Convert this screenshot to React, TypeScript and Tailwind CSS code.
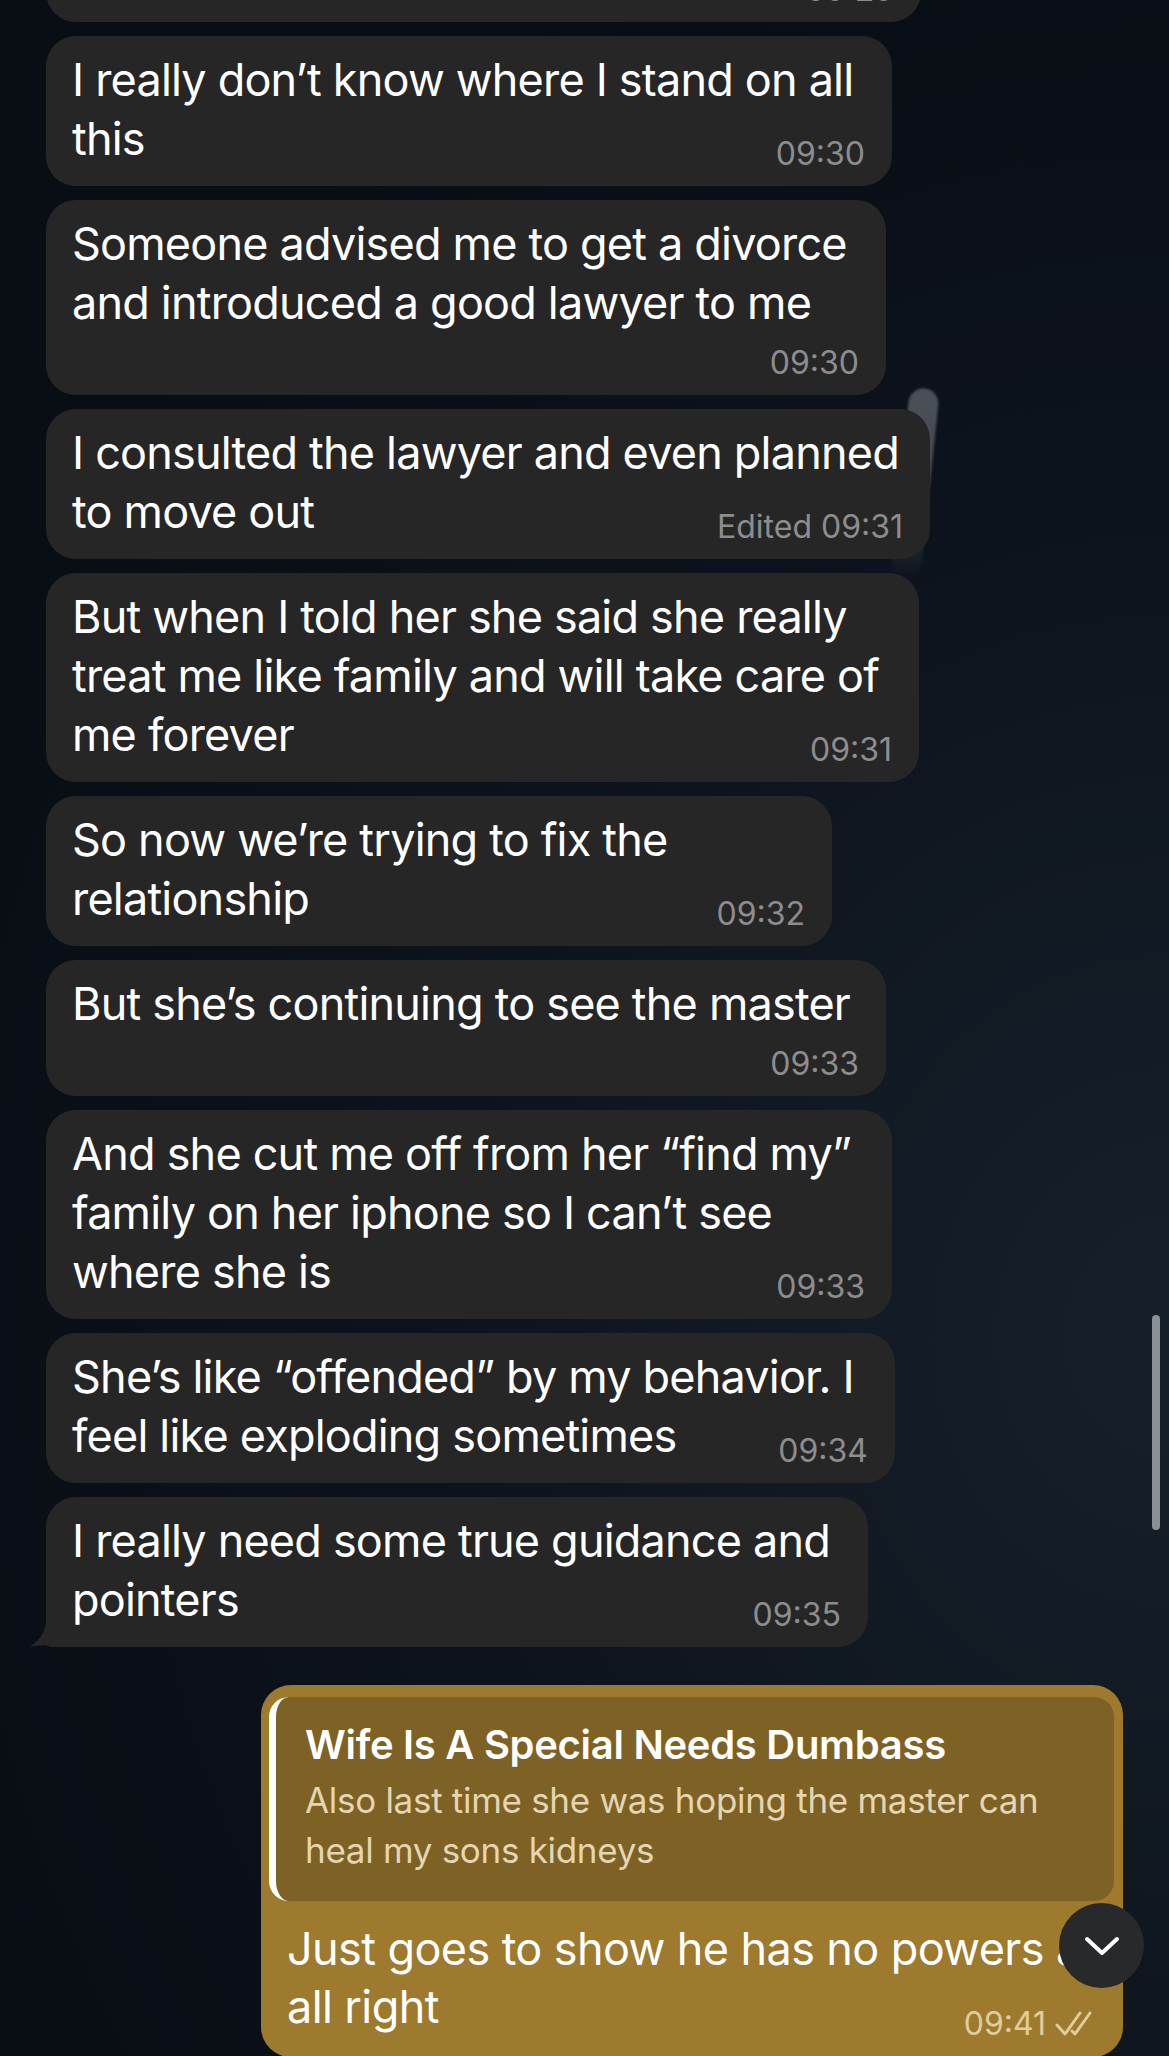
import React from 'react';

type Msg = {
    lines: string[];
    time: string;
    inline: boolean;
    width: string;
    tail?: boolean;
    first?: boolean;
};

const messages: Msg[] = [
    { lines: ['She goes there almost every weekend now'], time: '09:29', inline: false, width: 'w-[875px]', first: true },
    { lines: ['I really don’t know where I stand on all', 'this'], time: '09:30', inline: true, width: 'w-[846px]' },
    { lines: ['Someone advised me to get a divorce', 'and introduced a good lawyer to me'], time: '09:30', inline: false, width: 'w-[840px]' },
    { lines: ['I consulted the lawyer and even planned', 'to move out'], time: 'Edited 09:31', inline: true, width: 'w-[884px]' },
    { lines: ['But when I told her she said she really', 'treat me like family and will take care of', 'me forever'], time: '09:31', inline: true, width: 'w-[873px]' },
    { lines: ['So now we’re trying to fix the', 'relationship'], time: '09:32', inline: true, width: 'w-[786px]' },
    { lines: ['But she’s continuing to see the master'], time: '09:33', inline: false, width: 'w-[840px]' },
    { lines: ['And she cut me off from her “find my”', 'family on her iphone so I can’t see', 'where she is'], time: '09:33', inline: true, width: 'w-[846px]' },
    { lines: ['She’s like “offended” by my behavior. I', 'feel like exploding sometimes'], time: '09:34', inline: true, width: 'w-[849px]' },
    { lines: ['I really need some true guidance and', 'pointers'], time: '09:35', inline: true, width: 'w-[822px]', tail: true },
];

const Bubble = ({ msg }: { msg: Msg }) => (
    <div
        className={`relative ${msg.width} ${msg.first ? '-mt-[114px]' : ''} ${msg.tail ? 'rounded-[30px] rounded-bl-[6px]' : 'rounded-[30px]'} bg-[#262626] pt-[14px] pb-[13px] pl-[26px] pr-[27px]`}
    >
        <p className="text-[45px] leading-[59px] tracking-[-0.8px] text-white whitespace-nowrap">
            {msg.lines.map((line, i) => (
                <React.Fragment key={i}>
                    {i > 0 && <br />}
                    {line}
                </React.Fragment>
            ))}
        </p>
        <div className={`flex justify-end text-[32px] leading-[38px] text-[#8d8d8f] ${msg.inline ? '-mt-[33px]' : 'mt-[12px]'}`}>
            {msg.time}
        </div>
        {msg.tail && (
            <svg className="absolute -left-[17px] bottom-0" width="30" height="32" viewBox="0 0 30 32">
                <path d="M17 0 L30 0 L30 32 L22 32 C16 29 10 30.5 0 32 C8 28 15 20 17 8 Z" fill="#262626" />
            </svg>
        )}
    </div>
);

const DoubleCheck = () => (
    <svg width="44" height="28" viewBox="0 0 44 28" fill="none" stroke="#e0cd9c" strokeWidth="3" strokeLinecap="round" strokeLinejoin="round">
        <path d="M3 15 L11 24 L26 3" />
        <path d="M18 21 L21 24 L36 3" />
    </svg>
);

export default function App() {
    return (
        <div className="relative h-[2056px] w-full overflow-hidden bg-[radial-gradient(ellipse_at_100%_65%,#16202b_0%,#0d131c_45%,#090d14_80%)] font-['Inter',sans-serif]">
            {/* faint wallpaper streak peeking out behind the bubbles */}
            <div className="absolute left-[900px] top-[388px] h-[190px] w-[30px] rotate-[6deg] rounded-full bg-gradient-to-b from-[#8a8f96]/50 via-[#a3a7ad]/35 to-transparent blur-[1px]" />

            <div className="relative flex flex-col gap-[14px] pl-[46px] pr-[46px]">
                {messages.map((msg, i) => (
                    <Bubble key={i} msg={msg} />
                ))}

                <div className="mt-[24px] self-end w-[862px] rounded-[30px] bg-[#9d7a2d] pt-[12px] pl-[8px] pr-[9px] pb-[14px]">
                    <div className="rounded-[20px] border-l-[7px] border-white bg-[#7e6124] pt-[23px] pb-[26px] pl-[29px]">
                        <p className="text-[40px] leading-[49px] font-semibold tracking-[-0.3px] text-white">Wife Is A Special Needs Dumbass</p>
                        <p className="mt-[6px] text-[35px] leading-[50px] tracking-[-0.3px] text-[#e4d6b2]">
                            Also last time she was hoping the master can
                            <br />
                            heal my sons kidneys
                        </p>
                    </div>
                    <div className="pl-[18px] pr-[16px] pt-[19px]">
                        <p className="text-[45px] leading-[58px] tracking-[-0.6px] text-white whitespace-nowrap">
                            Just goes to show he has no powers at
                            <br />
                            all right
                        </p>
                        <div className="-mt-[31px] flex items-center justify-end gap-[8px] text-[32px] leading-[38px] text-[#e0cd9c]">
                            <span>09:41</span>
                            <DoubleCheck />
                        </div>
                    </div>
                </div>
            </div>

            {/* scroll indicator */}
            <div className="absolute left-[1152px] top-[1315px] h-[215px] w-[8px] rounded-full bg-[#8b9096]" />

            {/* jump to bottom button */}
            <button className="absolute left-[1059px] top-[1903px] grid h-[85px] w-[85px] place-items-center rounded-full bg-[#27292b]">
                <svg width="36" height="22" viewBox="0 0 36 22" fill="none" stroke="white" strokeWidth="4" strokeLinecap="round" strokeLinejoin="round">
                    <path d="M3 4 L18 18 L33 4" />
                </svg>
            </button>
        </div>
    );
}
